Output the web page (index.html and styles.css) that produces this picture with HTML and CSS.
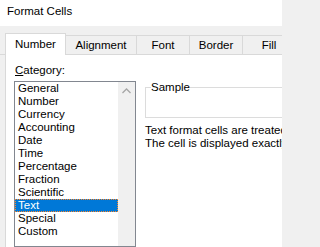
FILE: index.html
```html
<!DOCTYPE html>
<html lang="en">
<head>
<meta charset="utf-8">
<title>Format Cells</title>
<link rel="stylesheet" href="styles.css">
</head>
<body>
<div class="dialog">
  <div class="titlebar">Format Cells</div>
  <div class="tabstrip">
    <div class="tab active">Number</div>
    <div class="tab wide">Alignment</div>
    <div class="tab">Font</div>
    <div class="tab">Border</div>
    <div class="tab">Fill</div>
  </div>
  <div class="panel">
    <div class="left">
      <div class="label"><u>C</u>ategory:</div>
      <div class="listbox">
        <ul class="items">
          <li>General</li>
          <li>Number</li>
          <li>Currency</li>
          <li>Accounting</li>
          <li>Date</li>
          <li>Time</li>
          <li>Percentage</li>
          <li>Fraction</li>
          <li>Scientific</li>
          <li class="selected">Text</li>
          <li>Special</li>
          <li>Custom</li>
        </ul>
        <div class="scrollbar">
          <svg class="arrow" width="17" height="17" viewBox="0 0 17 17" aria-hidden="true">
            <path d="M4.5 11 L8.5 7 L12.5 11" fill="none" stroke="#a6a6a6" stroke-width="1.3"/>
          </svg>
        </div>
      </div>
    </div>
    <div class="right">
      <fieldset class="sample"><legend>Sample</legend></fieldset>
      <p class="desc">Text format cells are treated as text even when a number is in the cell.<br>The cell is displayed exactly as entered.</p>
    </div>
  </div>
</div>
</body>
</html>
```
FILE: styles.css
```css
html, body {
  margin: 0;
  padding: 0;
  width: 282px;
  height: 247px;
  overflow: hidden;
}
body {
  background: #f0f0f0;
  font-family: "Liberation Sans", Arial, sans-serif;
  font-size: 11.5px;
  color: #000;
}
.dialog {
  width: 282px;
  height: 247px;
  overflow: hidden;
  display: flex;
  flex-direction: column;
}
.titlebar {
  flex: none;
  height: 26px;
  background: #fff;
  padding-left: 7px;
  line-height: 22px;
}
.tabstrip {
  flex: none;
  height: 29px;
  display: flex;
  align-items: flex-end;
  padding-left: 5px;
  overflow: hidden;
  box-shadow: inset 0 -1px 0 #d9d9d9;
}
.tab {
  flex: none;
  box-sizing: border-box;
  width: 53px;
  height: 19px;
  margin-bottom: 1px;
  border-top: 1px solid #d9d9d9;
  border-right: 1px solid #d9d9d9;
  line-height: 18px;
  text-align: center;
  white-space: nowrap;
}
.tab.active {
  width: 61px;
  height: 22px;
  margin-bottom: 0;
  background: #fff;
  border-left: 1px solid #d9d9d9;
  line-height: 21px;
}
.tab.wide {
  width: 71px;
}
.panel {
  flex: 1;
  min-height: 0;
  margin-left: 5px;
  background: #fff;
  border-left: 1px solid #d9d9d9;
  display: flex;
  padding-top: 8px;
  overflow: hidden;
}
.left {
  flex: none;
  width: 122px;
  margin-left: 8px;
  display: flex;
  flex-direction: column;
}
.label {
  line-height: 15px;
  padding-left: 1px;
}
.listbox {
  margin-top: 3px;
  height: 200px;
  border: 1px solid #828790;
  display: flex;
}
.items {
  flex: 1;
  list-style: none;
  margin: 0;
  padding: 0;
}
.items li {
  height: 13px;
  line-height: 13px;
  padding-left: 3px;
  white-space: nowrap;
}
.items li.selected {
  background: #0078d7;
  color: #fff;
  outline: 1px dotted #ff8728;
  outline-offset: -1px;
}
.scrollbar {
  flex: none;
  width: 17px;
  background: #f0f0f0;
}
.arrow {
  display: block;
}
.right {
  flex: none;
  width: 300px;
  margin-left: 9px;
  margin-top: 17px;
}
.sample {
  box-sizing: border-box;
  height: 38px;
  margin: 0;
  padding: 0;
  min-width: 0;
  border: 1px solid #dcdcdc;
}
.sample legend {
  padding: 0;
  margin-left: 5px;
  line-height: 15px;
}
.desc {
  margin: 6px 0 0;
  line-height: 13px;
  white-space: nowrap;
}
```
